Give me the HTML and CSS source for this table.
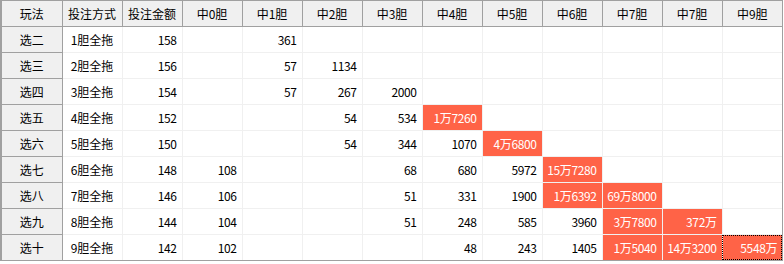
FILE: index.html
```html
<!DOCTYPE html>
<html lang="zh">
<head>
<meta charset="utf-8">
<link rel="stylesheet" href="styles.css">
</head>
<body>
<div class="grid">
<table>
<thead>
<tr><th>玩法</th><th>投注方式</th><th>投注金额</th><th>中0胆</th><th>中1胆</th><th>中2胆</th><th>中3胆</th><th>中4胆</th><th>中5胆</th><th>中6胆</th><th>中7胆</th><th>中7胆</th><th>中9胆</th></tr>
</thead>
<tbody>
<tr><th>选二</th><td class="c">1胆全拖</td><td>158</td><td></td><td>361</td><td></td><td></td><td></td><td></td><td></td><td></td><td></td><td></td></tr>
<tr><th>选三</th><td class="c">2胆全拖</td><td>156</td><td></td><td>57</td><td>1134</td><td></td><td></td><td></td><td></td><td></td><td></td><td></td></tr>
<tr><th>选四</th><td class="c">3胆全拖</td><td>154</td><td></td><td>57</td><td>267</td><td>2000</td><td></td><td></td><td></td><td></td><td></td><td></td></tr>
<tr><th>选五</th><td class="c">4胆全拖</td><td>152</td><td></td><td></td><td>54</td><td>534</td><td class="hi">1万7260</td><td></td><td></td><td></td><td></td><td></td></tr>
<tr><th>选六</th><td class="c">5胆全拖</td><td>150</td><td></td><td></td><td>54</td><td>344</td><td>1070</td><td class="hi">4万6800</td><td></td><td></td><td></td><td></td></tr>
<tr><th>选七</th><td class="c">6胆全拖</td><td>148</td><td>108</td><td></td><td></td><td>68</td><td>680</td><td>5972</td><td class="hi">15万7280</td><td></td><td></td><td></td></tr>
<tr><th>选八</th><td class="c">7胆全拖</td><td>146</td><td>106</td><td></td><td></td><td>51</td><td>331</td><td>1900</td><td class="hi">1万6392</td><td class="hi">69万8000</td><td></td><td></td></tr>
<tr><th>选九</th><td class="c">8胆全拖</td><td>144</td><td>104</td><td></td><td></td><td>51</td><td>248</td><td>585</td><td>3960</td><td class="hi">3万7800</td><td class="hi">372万</td><td></td></tr>
<tr><th>选十</th><td class="c">9胆全拖</td><td>142</td><td>102</td><td></td><td></td><td></td><td>48</td><td>243</td><td>1405</td><td class="hi">1万5040</td><td class="hi">14万3200</td><td class="hi focus">5548万</td></tr>
</tbody>
</table>
</div>
</body>
</html>
```
FILE: styles.css
```css
html, body {
  margin: 0;
  padding: 0;
  background: #ffffff;
}
body {
  font-family: "Noto Sans CJK SC", "Liberation Sans", sans-serif;
  font-size: 12px;
  color: #000;
}
.grid {
  width: 780px;
  border-left: 2px solid #a0a0a0;
  border-top: 1px solid #a0a0a0;
  border-bottom: 1px solid #a0a0a0;
  border-right: 1px solid #a0a0a0;
}
table {
  border-collapse: collapse;
  table-layout: fixed;
  width: 780px;
}
th, td {
  width: 59px;
  height: 25px;
  padding: 0;
  box-sizing: border-box;
  line-height: 25px;
  white-space: nowrap;
  overflow: hidden;
}
th {
  background: #f0f0f0;
  font-weight: normal;
  text-align: center;
  border-right: 1px solid #a0a0a0;
  border-bottom: 1px solid #a0a0a0;
}
thead th:last-child {
  border-right: none;
}
td {
  background: #ffffff;
  text-align: right;
  padding-right: 5px;
  letter-spacing: -0.4px;
  border-right: 1px solid #f0f0f0;
  border-bottom: 1px solid #f0f0f0;
}
td:last-child {
  border-right: none;
}
tbody tr:last-child td,
tbody tr:last-child th {
  border-bottom: none;
}
td.c {
  text-align: center;
  padding-right: 0;
  letter-spacing: 0;
}
td.hi {
  background: #ff6347;
  color: #ffffff;
}
td.focus {
  outline: 1px dotted #000;
  outline-offset: -1px;
}
```
